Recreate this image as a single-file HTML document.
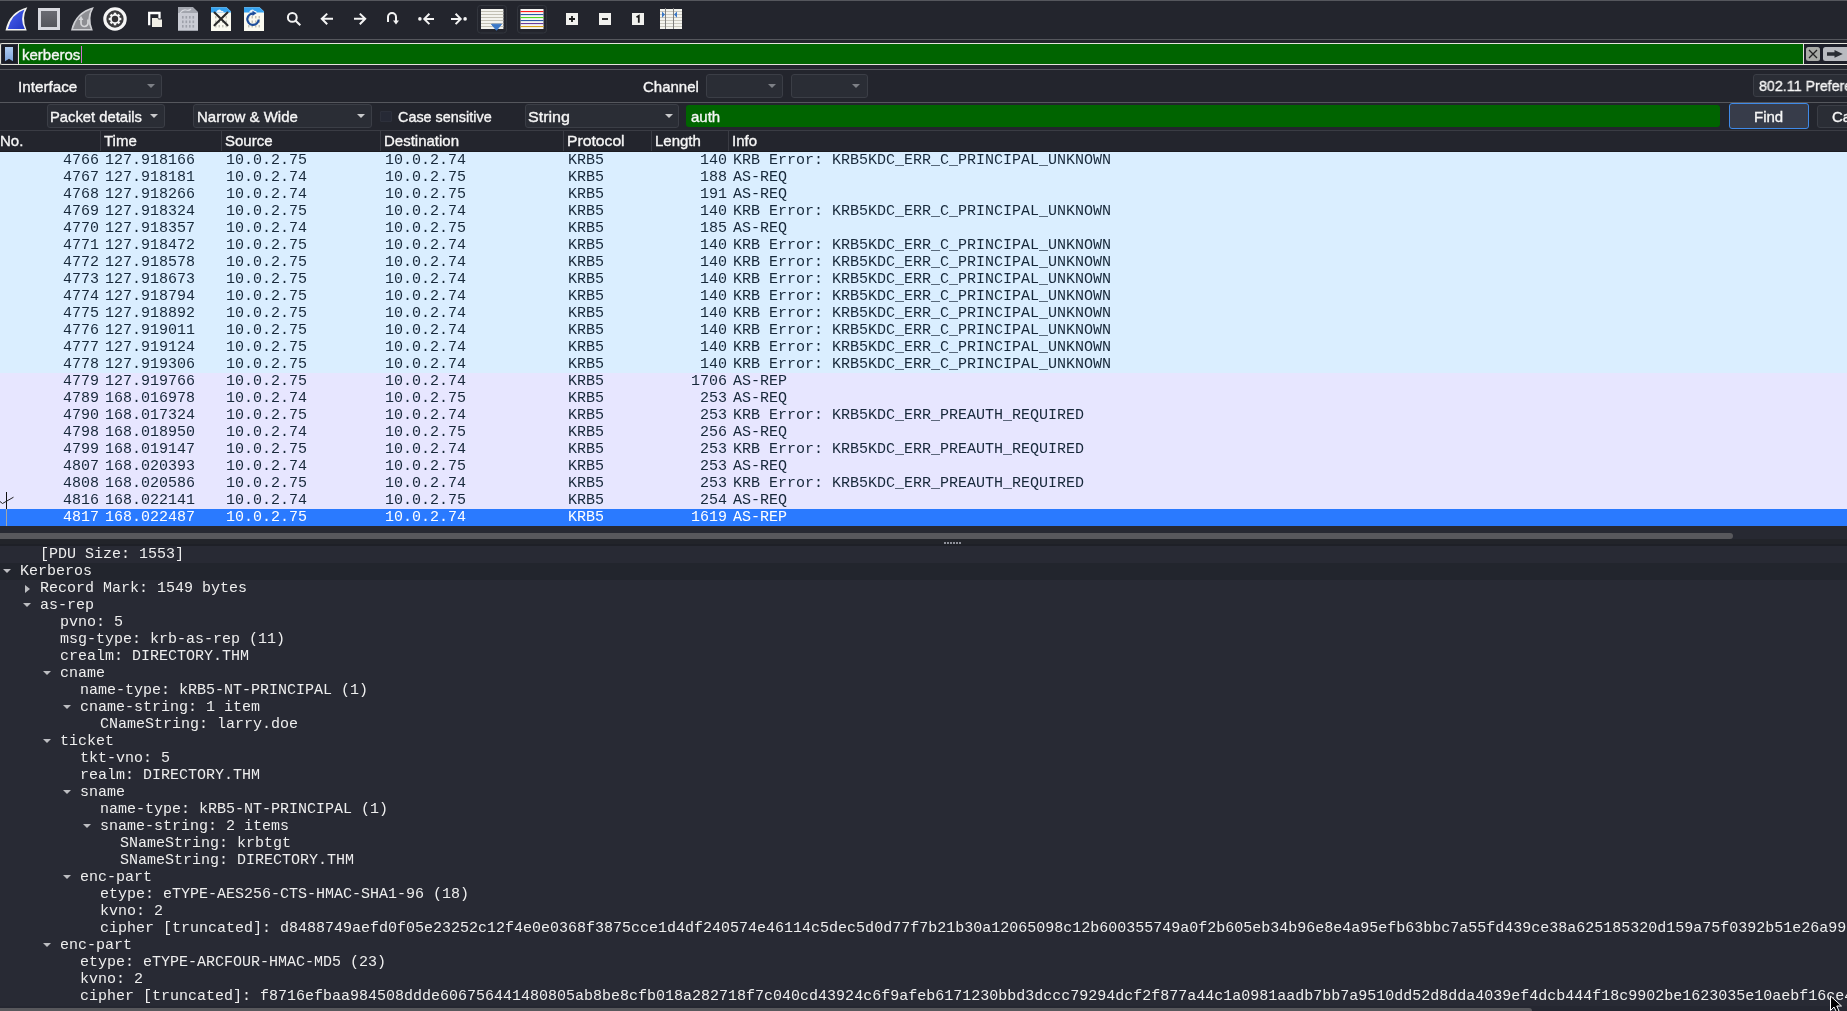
<!DOCTYPE html>
<html><head><meta charset="utf-8">
<style>
*{box-sizing:border-box;margin:0;padding:0}
html,body{width:1847px;height:1011px;overflow:hidden;-webkit-font-smoothing:antialiased;background:#23252d;font-family:"Liberation Sans",sans-serif;color:#eeeeee}
.a{position:absolute}
.hl{position:absolute;left:0;width:1847px;height:1px;background:#55575d}
.ui{font-family:"Liberation Sans",sans-serif;font-size:15px;line-height:17px;white-space:pre;color:#f6f6f6;-webkit-text-stroke:0.35px #f6f6f6}
.combo{position:absolute;border:1px solid #3b3e46;border-radius:3px;background:#2a2d35}
.arr{position:absolute;width:0;height:0;border-left:4px solid transparent;border-right:4px solid transparent;border-top:4px solid #c9cacc}
.arr.dim{border-top-color:#7d8086}
#list{position:absolute;left:0;top:152px;width:1847px;height:374px;font-family:"Liberation Mono",monospace;font-size:15px;line-height:17px;color:#17283a}
.r span,.d span{white-space:pre}
.r{position:relative;height:17px;background:#daeeff}
.r.t{background:#e7e6ff}
.r.s{background:#2a7aff;color:#ffffff}
.r span{position:absolute;top:0}
.c1{right:1748px}
.c2{left:105px}
.c3{left:226px}
.c4{left:385px}
.c5{left:568px}
.c6{right:1120px}
.c7{left:733px}
#det{position:absolute;left:0;top:546px;width:1847px;height:465px;background:#282a34;font-family:"Liberation Mono",monospace;font-size:15px;line-height:17px;color:#eeeeee;white-space:pre}
.d{position:absolute;left:0;height:17px;width:1847px}
.d span{position:absolute;top:0}
.tri-d{position:absolute;width:0;height:0;border-left:4px solid transparent;border-right:4px solid transparent;border-top:4px solid #bdbec2}
.tri-r{position:absolute;width:0;height:0;border-top:4px solid transparent;border-bottom:4px solid transparent;border-left:5px solid #bdbec2}
</style></head><body><div id="root" style="position:absolute;left:0;top:0;width:1847px;height:1011px;will-change:transform">
<div class="hl" style="top:0"></div>
<div id="toolbar"><svg class="a" style="left:0;top:0" width="700" height="39" viewBox="0 0 700 39">
<defs>
<linearGradient id="gb" x1="0" y1="0" x2="1" y2="1"><stop offset="0" stop-color="#4a62f0"/><stop offset="1" stop-color="#2337c4"/></linearGradient>
<linearGradient id="gs" x1="0" y1="0" x2="0" y2="1"><stop offset="0" stop-color="#6a6b72"/><stop offset="1" stop-color="#55565c"/></linearGradient>
</defs>
<!-- start shark -->
<path d="M5.5,30.5 Q9,12 27.3,7.2 Q21,18 26.7,30.5 Z" fill="#f4f4f0"/>
<path d="M7.8,29 Q11.5,14 24.5,9.5 Q19.5,19 24.8,29 Z" fill="url(#gb)"/>
<!-- stop -->
<rect x="38" y="8" width="22" height="22" fill="#d8d9df"/>
<rect x="41" y="11" width="16" height="16" fill="url(#gs)"/>
<!-- restart shark -->
<path d="M71,30.4 Q75,12 93.9,7.1 Q87.5,18 92.8,30.4 Z" fill="#cfd0d4"/>
<path d="M73,29 Q77,14 91,9.5 Q85.8,19 90.8,29 Z" fill="#8d8e93"/>
<path d="M81,19.5 V23 A3.5,3.5 0 0 0 88,23 V19.5" fill="none" stroke="#d4d5d8" stroke-width="1.7"/>
<path d="M78.6,20 L81,15.8 L83.4,20 Z" fill="#d4d5d8"/>
<!-- gear -->
<circle cx="115" cy="19" r="10.2" fill="#3b3b3d" stroke="#f6f6f6" stroke-width="3.1"/>
<g fill="#f6f6f6" transform="translate(115,19)">
<circle r="4.9"/>
<rect x="-1.2" y="-6.3" width="2.4" height="12.6"/>
<rect x="-1.2" y="-6.3" width="2.4" height="12.6" transform="rotate(45)"/>
<rect x="-1.2" y="-6.3" width="2.4" height="12.6" transform="rotate(90)"/>
<rect x="-1.2" y="-6.3" width="2.4" height="12.6" transform="rotate(135)"/>
</g>
<circle cx="115" cy="19" r="3.2" fill="#333335"/>
<!-- open -->
<path d="M149.2,25.2 V13 H159.5 V18.5" fill="none" stroke="#ffffff" stroke-width="2.3"/>
<path d="M152,18 H157.5 L158.5,19.5 H162 V27 H152 Z" fill="#f1efe6"/>
<!-- file gray -->
<path d="M178,7 H192.7 L198,12.2 V30.8 H178 Z" fill="#c9cbd3"/>
<path d="M178,7 H192.7 L198,12.2 V13 H178 Z" fill="#a3a6ae"/><path d="M180,13 Q183,9 186,10 T191,9" fill="none" stroke="#d6d8de" stroke-width="1.2"/>
<g fill="#9ea1aa"><rect x="182" y="16" width="1.6" height="2.6"/><rect x="182" y="20.5" width="1.6" height="2.6"/><rect x="182" y="25" width="1.6" height="2.6"/><rect x="185.5" y="16" width="1.6" height="2.6"/><rect x="185.5" y="20.5" width="1.6" height="2.6"/><rect x="185.5" y="25" width="1.6" height="2.6"/><rect x="189" y="16" width="1.6" height="2.6"/><rect x="189" y="20.5" width="1.6" height="2.6"/><rect x="189" y="25" width="1.6" height="2.6"/><rect x="192.5" y="16" width="1.6" height="2.6"/><rect x="192.5" y="20.5" width="1.6" height="2.6"/><rect x="192.5" y="25" width="1.6" height="2.6"/></g>
<!-- close file -->
<path d="M211,7.2 H226.5 L231,11.5 V31 H211 Z" fill="#fbfaf0"/>
<path d="M211,7.2 H226.5 L231,11.5 V12.5 H211 Z" fill="#34a2f0"/><path d="M216,12.5 Q217,9.5 220,9.5 Q221,11 223,11 L224,12.5 Z" fill="#e8f2fa"/>
<g fill="#c4c3b8"><rect x="215" y="16" width="1.5" height="2.4"/><rect x="215" y="20.5" width="1.5" height="2.4"/><rect x="215" y="25" width="1.5" height="2.4"/><rect x="218.5" y="16" width="1.5" height="2.4"/><rect x="218.5" y="20.5" width="1.5" height="2.4"/><rect x="218.5" y="25" width="1.5" height="2.4"/><rect x="222" y="16" width="1.5" height="2.4"/><rect x="222" y="20.5" width="1.5" height="2.4"/><rect x="222" y="25" width="1.5" height="2.4"/><rect x="225.5" y="16" width="1.5" height="2.4"/><rect x="225.5" y="20.5" width="1.5" height="2.4"/><rect x="225.5" y="25" width="1.5" height="2.4"/></g>
<path d="M214.5,12.5 L227.5,25.3 M227.5,12.5 L214.5,25.3" stroke="#2a2a2a" stroke-width="2.1" stroke-linecap="round"/>
<!-- reload file -->
<path d="M244,7.2 H259.5 L264,11.5 V31 H244 Z" fill="#fbfaf0"/>
<path d="M244,7.2 H259.5 L264,11.5 V12.5 H244 Z" fill="#34a2f0"/><path d="M249,12.5 Q250,9.5 253,9.5 Q254,11 256,11 L257,12.5 Z" fill="#e8f2fa"/>
<g fill="#c4c3b8"><rect x="248" y="16" width="1.5" height="2.4"/><rect x="248" y="20.5" width="1.5" height="2.4"/><rect x="248" y="25" width="1.5" height="2.4"/><rect x="251.5" y="16" width="1.5" height="2.4"/><rect x="251.5" y="20.5" width="1.5" height="2.4"/><rect x="251.5" y="25" width="1.5" height="2.4"/><rect x="255" y="16" width="1.5" height="2.4"/><rect x="255" y="20.5" width="1.5" height="2.4"/><rect x="255" y="25" width="1.5" height="2.4"/><rect x="258.5" y="16" width="1.5" height="2.4"/><rect x="258.5" y="20.5" width="1.5" height="2.4"/><rect x="258.5" y="25" width="1.5" height="2.4"/></g>
<path d="M258.7,19.5 A5.7,5.7 0 1 1 253.8,13.6" fill="none" stroke="#1c4d9b" stroke-width="2.2"/>
<path d="M252.5,10.8 L256.5,13.2 L252.5,16 Z" fill="#1c4d9b"/>
<!-- search -->
<circle cx="292.3" cy="17.4" r="4.4" fill="none" stroke="#f4f4f4" stroke-width="2"/>
<path d="M295.4,20.6 L300.3,25.3" stroke="#f4f4f4" stroke-width="2.1"/>
<!-- back -->
<path d="M321.5,18.8 H333 M327.2,13.6 L321.8,18.8 L327.2,24.2" fill="none" stroke="#f4f4f4" stroke-width="2"/>
<!-- fwd -->
<path d="M354,18.8 H365.5 M359.8,13.6 L365.2,18.8 L359.8,24.2" fill="none" stroke="#f4f4f4" stroke-width="2"/>
<!-- uturn -->
<path d="M388,22 V17 A4,4 0 0 1 396,17 V21" fill="none" stroke="#f4f4f4" stroke-width="2"/>
<path d="M393,20.5 H399 L396,24.5 Z" fill="#f4f4f4"/>
<!-- first -->
<circle cx="419.9" cy="18.9" r="1.8" fill="#f4f4f4"/>
<path d="M424,18.9 H434 M429.4,13.8 L424.3,18.9 L429.4,24.1" fill="none" stroke="#f4f4f4" stroke-width="2"/>
<!-- last -->
<circle cx="465.1" cy="18.9" r="1.8" fill="#f4f4f4"/>
<path d="M451,18.9 H461 M455.6,13.8 L460.7,18.9 L455.6,24.1" fill="none" stroke="#f4f4f4" stroke-width="2"/>
<!-- autoscroll frame -->
<rect x="477.5" y="5.5" width="29" height="27.5" rx="3" fill="none" stroke="#33363e" stroke-width="1"/>
<rect x="481" y="9" width="22.4" height="20" fill="#f3f3ee"/>
<g fill="#c2c0b4"><rect x="481" y="11" width="22.4" height="1"/><rect x="481" y="14" width="22.4" height="1"/><rect x="481" y="17" width="22.4" height="1"/><rect x="481" y="20" width="22.4" height="1"/><rect x="481" y="23" width="22.4" height="1"/><rect x="481" y="26" width="22.4" height="1"/></g>
<path d="M491.5,24.2 H501.5 L496.5,30.3 Z" fill="#3a78c8" stroke="#3a78c8" stroke-width="1" stroke-linejoin="round"/>
<!-- colorize frame -->
<rect x="517.5" y="5.5" width="29" height="27.5" rx="3" fill="none" stroke="#33363e" stroke-width="1"/>
<rect x="520.5" y="9" width="23" height="20" fill="#f6f6f4"/>
<rect x="520.5" y="11" width="23" height="1.1" fill="#ff1c1c"/>
<rect x="520.5" y="14" width="23" height="1.1" fill="#2c5aa6"/>
<rect x="520.5" y="17" width="23" height="1.1" fill="#52d61e"/>
<rect x="520.5" y="20" width="23" height="1.1" fill="#2c5aa6"/>
<rect x="520.5" y="23" width="23" height="1.1" fill="#6b3c9c"/>
<rect x="520.5" y="26" width="23" height="1.1" fill="#d9a21c"/>
<!-- zoom in/out/1 -->
<rect x="566" y="13" width="12" height="12" fill="#f1f1ee"/>
<path d="M569,19 H575 M572,16 V22" stroke="#1a1a1a" stroke-width="1.8"/>
<rect x="599" y="13" width="12" height="12" fill="#f1f1ee"/>
<path d="M602,19 H608" stroke="#1a1a1a" stroke-width="1.8"/>
<rect x="632" y="13" width="12" height="12" fill="#f1f1ee"/>
<path d="M636.5,17.2 L638.8,15.8 V22.8" fill="none" stroke="#1a1a1a" stroke-width="1.8"/>
<!-- resize cols -->
<rect x="660" y="9" width="22" height="20" fill="#f4f4ef"/>
<g fill="#cbc9bf"><rect x="660" y="11" width="22" height="1"/><rect x="660" y="14" width="22" height="1"/><rect x="660" y="17" width="22" height="1"/><rect x="660" y="20" width="22" height="1"/><rect x="660" y="23" width="22" height="1"/><rect x="660" y="26" width="22" height="1"/></g>
<rect x="665" y="8" width="1" height="21" fill="#7f7f7f"/><rect x="673" y="8" width="1" height="21" fill="#7f7f7f"/>
<path d="M662,11.5 L665,14.6 L662,17.7 Z M677,11.5 L674,14.6 L677,17.7 Z" fill="#3a78c8"/>
</svg>
</div>
<div class="hl" style="top:39px"></div>

<!-- filter bar -->
<div class="a" style="left:0;top:43px;width:1847px;height:22px;border:1px solid #e4e4dc;border-right:none;border-radius:2px 0 0 2px;background:#1d1f29"></div>
<div class="a" style="left:19px;top:44px;width:1784px;height:20px;background:#006400"></div>
<div class="a" style="left:1803px;top:44px;width:1px;height:20px;background:#e4e4dc"></div>
<div class="a ui" style="left:22px;top:46px">kerberos</div>

<!-- bookmark -->
<div class="a" style="left:1px;top:44px;width:17px;height:20px;background:#1a1c26;border:1px solid #2a2d37;border-radius:2px"></div><div class="a" style="left:18px;top:44px;width:1px;height:20px;background:#e4e4dc"></div>
<svg class="a" style="left:0;top:40px" width="20" height="28"><defs><linearGradient id="bmk" x1="0" y1="0" x2="0" y2="1"><stop offset="0" stop-color="#b0cdf2"/><stop offset="1" stop-color="#7ea6de"/></linearGradient></defs><path d="M5,7 H13 V21.2 L9,18.8 L5,21.2 Z" fill="url(#bmk)"/></svg>
<div class="a" style="left:81px;top:46px;width:1px;height:17px;background:#d070d0"></div>
<!-- clear / apply -->
<svg class="a" style="left:1804px;top:44px" width="43" height="20">
<rect x="2" y="3" width="14" height="14" rx="2.5" fill="#a9aba6"/>
<path d="M5,6 L13,14 M13,6 L5,14" stroke="#222" stroke-width="1.3"/>
<rect x="19" y="3" width="30" height="14" rx="2.5" fill="#b9bbc0"/>
<path d="M23,8.2 H30.5 V6.1 L38.8,9.9 L30.5,13.7 V11.7 H23 Z" fill="#2a2d33"/>
</svg>
<div class="hl" style="top:69px"></div>
<!-- interface row -->
<div class="a ui" style="left:18px;top:78px;transform:scaleX(1.015);transform-origin:0 0">Interface</div>
<div class="combo" style="left:85px;top:74px;width:77px;height:24px"></div>
<div class="arr dim" style="left:147px;top:84px"></div>
<div class="a ui" style="left:643px;top:78px">Channel</div>
<div class="combo" style="left:706px;top:74px;width:77px;height:24px"></div>
<div class="arr dim" style="left:768px;top:84px"></div>
<div class="combo" style="left:791px;top:74px;width:77px;height:24px"></div>
<div class="arr dim" style="left:852px;top:84px"></div>
<div class="combo" style="left:1753px;top:74px;width:100px;height:23px"></div>
<div class="a ui" style="left:1759px;top:77px;transform:scaleX(0.95);transform-origin:0 0">802.11 Preferences</div>

<div class="hl" style="top:102px"></div>
<!-- find bar -->
<div class="combo" style="left:47px;top:104px;width:118px;height:24px"></div>
<div class="a ui" style="left:50px;top:108px;transform:scaleX(0.985);transform-origin:0 0">Packet details</div>
<div class="arr" style="left:150px;top:114px"></div>
<div class="combo" style="left:193px;top:104px;width:179px;height:24px"></div>
<div class="a ui" style="left:197px;top:108px">Narrow &amp; Wide</div>
<div class="arr" style="left:357px;top:114px"></div>
<div class="a" style="left:380px;top:111px;width:12px;height:11px;background:#262935;border:1px solid #2d303b;border-radius:1px"></div>
<div class="a ui" style="left:398px;top:108px;transform:scaleX(0.96);transform-origin:0 0">Case sensitive</div>
<div class="combo" style="left:525px;top:104px;width:154px;height:24px"></div>
<div class="a ui" style="left:528px;top:108px;transform:scaleX(1.07);transform-origin:0 0">String</div>
<div class="arr" style="left:665px;top:114px"></div>
<div class="a" style="left:686px;top:105px;width:1034px;height:22px;background:#006400;border-radius:3px"></div>
<div class="a ui" style="left:691px;top:108px">auth</div>
<div class="a" style="left:1729px;top:103px;width:80px;height:26px;background:#373c4a;border:1px solid #3f8ae8;border-radius:3px"></div>
<div class="a ui" style="left:1754px;top:108px">Find</div>
<div class="combo" style="left:1817px;top:105px;width:60px;height:23px"></div>
<div class="a ui" style="left:1832px;top:108px">Ca</div>

<!-- header -->
<div class="a" style="left:0;top:130px;width:1847px;height:22px;background:#23252d;border-top:1px solid #3a3c44;border-bottom:1px solid #1b1c21"></div>
<div id="hdr"><div class="a ui" style="left:0px;top:132px">No.</div><div class="a ui" style="left:104px;top:132px">Time</div><div class="a ui" style="left:225px;top:132px">Source</div><div class="a ui" style="left:384px;top:132px">Destination</div><div class="a ui" style="left:567px;top:132px;transform:scaleX(1.047);transform-origin:0 0">Protocol</div><div class="a ui" style="left:655px;top:132px">Length</div><div class="a ui" style="left:732px;top:132px">Info</div><div class="a" style="left:100px;top:131px;width:1px;height:20px;background:#3a3c44"></div><div class="a" style="left:221px;top:131px;width:1px;height:20px;background:#3a3c44"></div><div class="a" style="left:380px;top:131px;width:1px;height:20px;background:#3a3c44"></div><div class="a" style="left:563px;top:131px;width:1px;height:20px;background:#3a3c44"></div><div class="a" style="left:651px;top:131px;width:1px;height:20px;background:#3a3c44"></div><div class="a" style="left:728px;top:131px;width:1px;height:20px;background:#3a3c44"></div></div>

<div id="list">
<div class="r"><span class="c1">4766</span><span class="c2">127.918166</span><span class="c3">10.0.2.75</span><span class="c4">10.0.2.74</span><span class="c5">KRB5</span><span class="c6">140</span><span class="c7">KRB Error: KRB5KDC_ERR_C_PRINCIPAL_UNKNOWN</span></div>
<div class="r"><span class="c1">4767</span><span class="c2">127.918181</span><span class="c3">10.0.2.74</span><span class="c4">10.0.2.75</span><span class="c5">KRB5</span><span class="c6">188</span><span class="c7">AS-REQ</span></div>
<div class="r"><span class="c1">4768</span><span class="c2">127.918266</span><span class="c3">10.0.2.74</span><span class="c4">10.0.2.75</span><span class="c5">KRB5</span><span class="c6">191</span><span class="c7">AS-REQ</span></div>
<div class="r"><span class="c1">4769</span><span class="c2">127.918324</span><span class="c3">10.0.2.75</span><span class="c4">10.0.2.74</span><span class="c5">KRB5</span><span class="c6">140</span><span class="c7">KRB Error: KRB5KDC_ERR_C_PRINCIPAL_UNKNOWN</span></div>
<div class="r"><span class="c1">4770</span><span class="c2">127.918357</span><span class="c3">10.0.2.74</span><span class="c4">10.0.2.75</span><span class="c5">KRB5</span><span class="c6">185</span><span class="c7">AS-REQ</span></div>
<div class="r"><span class="c1">4771</span><span class="c2">127.918472</span><span class="c3">10.0.2.75</span><span class="c4">10.0.2.74</span><span class="c5">KRB5</span><span class="c6">140</span><span class="c7">KRB Error: KRB5KDC_ERR_C_PRINCIPAL_UNKNOWN</span></div>
<div class="r"><span class="c1">4772</span><span class="c2">127.918578</span><span class="c3">10.0.2.75</span><span class="c4">10.0.2.74</span><span class="c5">KRB5</span><span class="c6">140</span><span class="c7">KRB Error: KRB5KDC_ERR_C_PRINCIPAL_UNKNOWN</span></div>
<div class="r"><span class="c1">4773</span><span class="c2">127.918673</span><span class="c3">10.0.2.75</span><span class="c4">10.0.2.74</span><span class="c5">KRB5</span><span class="c6">140</span><span class="c7">KRB Error: KRB5KDC_ERR_C_PRINCIPAL_UNKNOWN</span></div>
<div class="r"><span class="c1">4774</span><span class="c2">127.918794</span><span class="c3">10.0.2.75</span><span class="c4">10.0.2.74</span><span class="c5">KRB5</span><span class="c6">140</span><span class="c7">KRB Error: KRB5KDC_ERR_C_PRINCIPAL_UNKNOWN</span></div>
<div class="r"><span class="c1">4775</span><span class="c2">127.918892</span><span class="c3">10.0.2.75</span><span class="c4">10.0.2.74</span><span class="c5">KRB5</span><span class="c6">140</span><span class="c7">KRB Error: KRB5KDC_ERR_C_PRINCIPAL_UNKNOWN</span></div>
<div class="r"><span class="c1">4776</span><span class="c2">127.919011</span><span class="c3">10.0.2.75</span><span class="c4">10.0.2.74</span><span class="c5">KRB5</span><span class="c6">140</span><span class="c7">KRB Error: KRB5KDC_ERR_C_PRINCIPAL_UNKNOWN</span></div>
<div class="r"><span class="c1">4777</span><span class="c2">127.919124</span><span class="c3">10.0.2.75</span><span class="c4">10.0.2.74</span><span class="c5">KRB5</span><span class="c6">140</span><span class="c7">KRB Error: KRB5KDC_ERR_C_PRINCIPAL_UNKNOWN</span></div>
<div class="r"><span class="c1">4778</span><span class="c2">127.919306</span><span class="c3">10.0.2.75</span><span class="c4">10.0.2.74</span><span class="c5">KRB5</span><span class="c6">140</span><span class="c7">KRB Error: KRB5KDC_ERR_C_PRINCIPAL_UNKNOWN</span></div>
<div class="r t"><span class="c1">4779</span><span class="c2">127.919766</span><span class="c3">10.0.2.75</span><span class="c4">10.0.2.74</span><span class="c5">KRB5</span><span class="c6">1706</span><span class="c7">AS-REP</span></div>
<div class="r t"><span class="c1">4789</span><span class="c2">168.016978</span><span class="c3">10.0.2.74</span><span class="c4">10.0.2.75</span><span class="c5">KRB5</span><span class="c6">253</span><span class="c7">AS-REQ</span></div>
<div class="r t"><span class="c1">4790</span><span class="c2">168.017324</span><span class="c3">10.0.2.75</span><span class="c4">10.0.2.74</span><span class="c5">KRB5</span><span class="c6">253</span><span class="c7">KRB Error: KRB5KDC_ERR_PREAUTH_REQUIRED</span></div>
<div class="r t"><span class="c1">4798</span><span class="c2">168.018950</span><span class="c3">10.0.2.74</span><span class="c4">10.0.2.75</span><span class="c5">KRB5</span><span class="c6">256</span><span class="c7">AS-REQ</span></div>
<div class="r t"><span class="c1">4799</span><span class="c2">168.019147</span><span class="c3">10.0.2.75</span><span class="c4">10.0.2.74</span><span class="c5">KRB5</span><span class="c6">253</span><span class="c7">KRB Error: KRB5KDC_ERR_PREAUTH_REQUIRED</span></div>
<div class="r t"><span class="c1">4807</span><span class="c2">168.020393</span><span class="c3">10.0.2.74</span><span class="c4">10.0.2.75</span><span class="c5">KRB5</span><span class="c6">253</span><span class="c7">AS-REQ</span></div>
<div class="r t"><span class="c1">4808</span><span class="c2">168.020586</span><span class="c3">10.0.2.75</span><span class="c4">10.0.2.74</span><span class="c5">KRB5</span><span class="c6">253</span><span class="c7">KRB Error: KRB5KDC_ERR_PREAUTH_REQUIRED</span></div>
<div class="r t"><span class="c1">4816</span><span class="c2">168.022141</span><span class="c3">10.0.2.74</span><span class="c4">10.0.2.75</span><span class="c5">KRB5</span><span class="c6">254</span><span class="c7">AS-REQ</span></div>
<div class="r s"><span class="c1">4817</span><span class="c2">168.022487</span><span class="c3">10.0.2.75</span><span class="c4">10.0.2.74</span><span class="c5">KRB5</span><span class="c6">1619</span><span class="c7">AS-REP</span></div>
</div>

<div class="a" style="left:0;top:526px;width:1847px;height:19px;background:#272932"></div>
<div class="a" style="left:0;top:533px;width:1733px;height:6px;background:#58585c;border-radius:0 3px 3px 0"></div>
<div class="a" style="left:0;top:539px;width:1847px;height:6px;background:#22242a"></div>

<svg class="a" style="left:0;top:490px" width="20" height="40">
<path d="M6.5,2 V19" stroke="#111" stroke-width="1"/>
<path d="M6.5,19 V36" stroke="#a3a6a8" stroke-width="1"/>
<path d="M0,11.5 L2.5,13.5 L13.5,7.2" fill="none" stroke="#222" stroke-width="1"/>
</svg>
<div class="a" style="left:944px;top:542px;width:17px;height:2px;background-image:linear-gradient(90deg,#8d8f98 66%,transparent 66%);background-size:3px 2px"></div><div class="a" style="left:0;top:544px;width:1847px;height:2px;background:#1e2027"></div>
<div id="det">
<div class="d" style="top:0px"><span style="left:40px">[PDU Size: 1553]</span></div>
<div class="d" style="top:17px;background:#22252d"><i class="tri-d" style="left:3px;top:6px"></i><span style="left:20px">Kerberos</span></div>
<div class="d" style="top:34px"><i class="tri-r" style="left:25px;top:5px"></i><span style="left:40px">Record Mark: 1549 bytes</span></div>
<div class="d" style="top:51px"><i class="tri-d" style="left:23px;top:6px"></i><span style="left:40px">as-rep</span></div>
<div class="d" style="top:68px"><span style="left:60px">pvno: 5</span></div>
<div class="d" style="top:85px"><span style="left:60px">msg-type: krb-as-rep (11)</span></div>
<div class="d" style="top:102px"><span style="left:60px">crealm: DIRECTORY.THM</span></div>
<div class="d" style="top:119px"><i class="tri-d" style="left:43px;top:6px"></i><span style="left:60px">cname</span></div>
<div class="d" style="top:136px"><span style="left:80px">name-type: kRB5-NT-PRINCIPAL (1)</span></div>
<div class="d" style="top:153px"><i class="tri-d" style="left:63px;top:6px"></i><span style="left:80px">cname-string: 1 item</span></div>
<div class="d" style="top:170px"><span style="left:100px">CNameString: larry.doe</span></div>
<div class="d" style="top:187px"><i class="tri-d" style="left:43px;top:6px"></i><span style="left:60px">ticket</span></div>
<div class="d" style="top:204px"><span style="left:80px">tkt-vno: 5</span></div>
<div class="d" style="top:221px"><span style="left:80px">realm: DIRECTORY.THM</span></div>
<div class="d" style="top:238px"><i class="tri-d" style="left:63px;top:6px"></i><span style="left:80px">sname</span></div>
<div class="d" style="top:255px"><span style="left:100px">name-type: kRB5-NT-PRINCIPAL (1)</span></div>
<div class="d" style="top:272px"><i class="tri-d" style="left:83px;top:6px"></i><span style="left:100px">sname-string: 2 items</span></div>
<div class="d" style="top:289px"><span style="left:120px">SNameString: krbtgt</span></div>
<div class="d" style="top:306px"><span style="left:120px">SNameString: DIRECTORY.THM</span></div>
<div class="d" style="top:323px"><i class="tri-d" style="left:63px;top:6px"></i><span style="left:80px">enc-part</span></div>
<div class="d" style="top:340px"><span style="left:100px">etype: eTYPE-AES256-CTS-HMAC-SHA1-96 (18)</span></div>
<div class="d" style="top:357px"><span style="left:100px">kvno: 2</span></div>
<div class="d" style="top:374px"><span style="left:100px">cipher [truncated]: d8488749aefd0f05e23252c12f4e0e0368f3875cce1d4df240574e46114c5dec5d0d77f7b21b30a12065098c12b600355749a0f2b605eb34b96e8e4a95efb63bbc7a55fd439ce38a625185320d159a75f0392b51e26a99a</span></div>
<div class="d" style="top:391px"><i class="tri-d" style="left:43px;top:6px"></i><span style="left:60px">enc-part</span></div>
<div class="d" style="top:408px"><span style="left:80px">etype: eTYPE-ARCFOUR-HMAC-MD5 (23)</span></div>
<div class="d" style="top:425px"><span style="left:80px">kvno: 2</span></div>
<div class="d" style="top:442px"><span style="left:80px">cipher [truncated]: f8716efbaa984508ddde606756441480805ab8be8cfb018a282718f7c040cd43924c6f9afeb6171230bbd3dccc79294dcf2f877a44c1a0981aadb7bb7a9510dd52d8dda4039ef4dcb444f18c9902be1623035e10aebf16ce4a</span></div>
</div>
<div class="a" style="left:0;top:1006px;width:1847px;height:5px;background:#252731"></div><div class="a" style="left:0;top:1008px;width:1532px;height:4px;background:#58585c;border-radius:0 3px 0 0"></div>
<svg class="a" style="left:1829px;top:995px" width="18" height="16"><path d="M1.5,1 V15.5 L5,12 L7.5,17 L10,16 L7.8,11 H12.5 Z" fill="#000" stroke="#fff" stroke-width="1"/></svg>
</div></body></html>
